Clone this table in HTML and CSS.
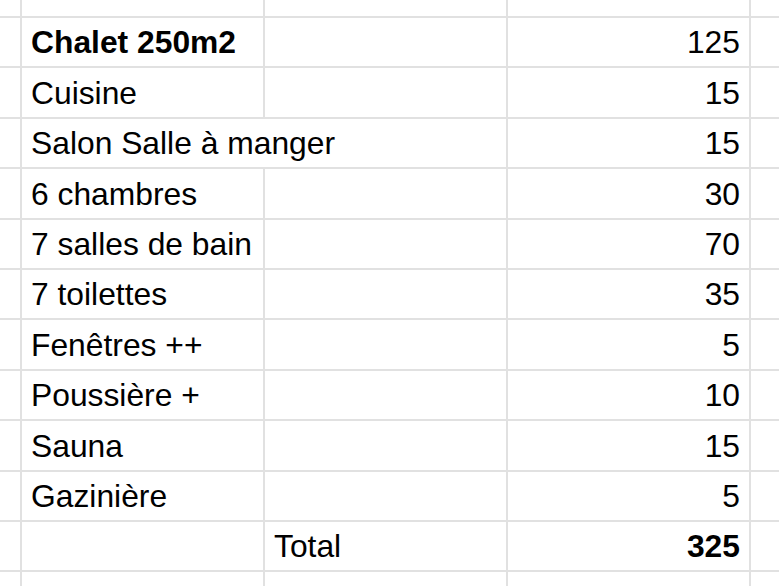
FILE: index.html
```html
<!DOCTYPE html>
<html lang="fr">
<head>
<meta charset="utf-8">
<title>Chalet</title>
<link rel="stylesheet" href="styles.css">
</head>
<body>
<div class="sheet">
  <div class="c"></div><div class="c"></div><div class="c"></div><div class="c"></div><div class="c"></div>

  <div class="c"></div><div class="c t b">Chalet 250m2</div><div class="c"></div><div class="c t n">125</div><div class="c"></div>
  <div class="c"></div><div class="c t">Cuisine</div><div class="c"></div><div class="c t n">15</div><div class="c"></div>
  <div class="c"></div><div class="c t span2">Salon Salle à manger</div><div class="c t n">15</div><div class="c"></div>
  <div class="c"></div><div class="c t">6 chambres</div><div class="c"></div><div class="c t n">30</div><div class="c"></div>
  <div class="c"></div><div class="c t">7 salles de bain</div><div class="c"></div><div class="c t n">70</div><div class="c"></div>
  <div class="c"></div><div class="c t">7 toilettes</div><div class="c"></div><div class="c t n">35</div><div class="c"></div>
  <div class="c"></div><div class="c t">Fenêtres ++</div><div class="c"></div><div class="c t n">5</div><div class="c"></div>
  <div class="c"></div><div class="c t">Poussière +</div><div class="c"></div><div class="c t n">10</div><div class="c"></div>
  <div class="c"></div><div class="c t">Sauna</div><div class="c"></div><div class="c t n">15</div><div class="c"></div>
  <div class="c"></div><div class="c t">Gazinière</div><div class="c"></div><div class="c t n">5</div><div class="c"></div>
  <div class="c"></div><div class="c"></div><div class="c t">Total</div><div class="c t n b">325</div><div class="c"></div>

  <div class="c"></div><div class="c"></div><div class="c"></div><div class="c"></div><div class="c"></div>
</div>
</body>
</html>
```

FILE: styles.css
```css
html, body {
  margin: 0;
  padding: 0;
  background: #ffffff;
}

.sheet {
  width: 779px;
  height: 586px;
  overflow: hidden;
  display: grid;
  grid-template-columns: 20px 241px 241px 241px 1fr;
  grid-template-rows: 16px 48px 49px 48px 49px 48px 48px 49px 48px 49px 48px 48px 1fr;
  gap: 2px;
  background: #e1e1e1;
  font-family: "Liberation Sans", Arial, sans-serif;
  font-size: 31.8px;
  color: #000000;
}

.c {
  background: #ffffff;
  min-width: 0;
}

.t {
  display: flex;
  align-items: flex-end;
  padding: 0 9px 8px 9px;
  line-height: 32px;
  white-space: nowrap;
}

.span2 {
  grid-column: span 2;
}

.n {
  justify-content: flex-end;
}

.b {
  font-weight: bold;
}
```
